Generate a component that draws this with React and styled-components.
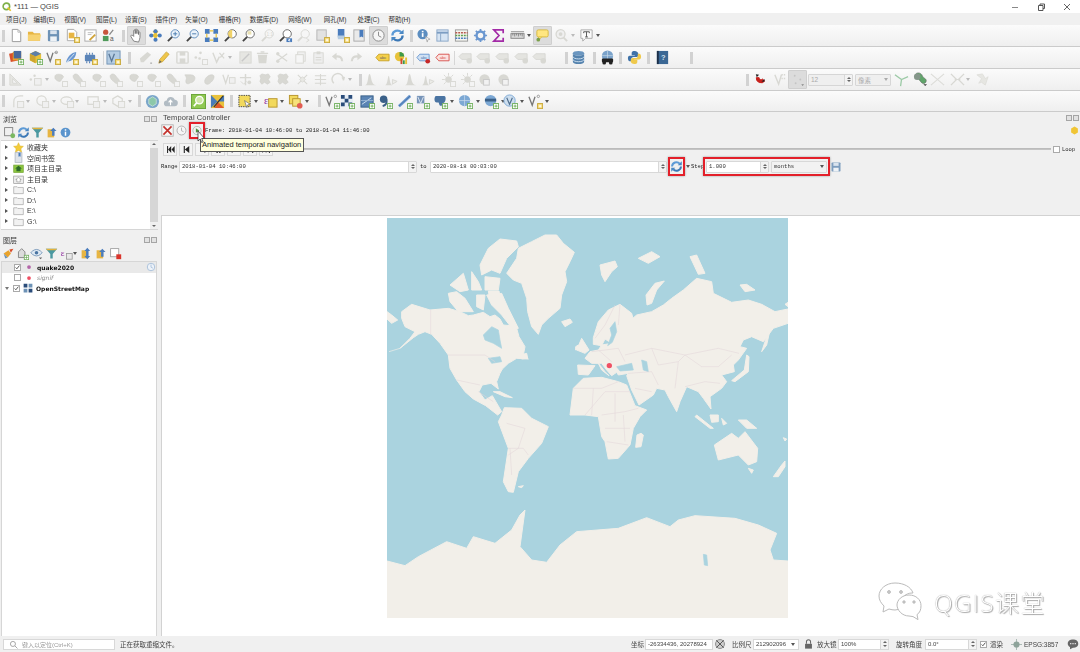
import React from 'react'
import styled, { createGlobalStyle } from 'styled-components'

const SANS = '"Liberation Sans", "Noto Sans CJK SC", sans-serif'
const MONO = '"Liberation Mono", "Noto Sans CJK SC", monospace'

const GlobalStyle = createGlobalStyle`
  html, body { margin: 0; padding: 0; background: #f0f0f0; }
  body { font-family: ${SANS}; font-size: 7px; color: #222; overflow: hidden; }
`

const Page = styled.div`
  width: 1080px;
  height: 652px;
  display: flex;
  flex-direction: column;
  overflow: hidden;
  position: relative;
  filter: blur(0.45px);
`

/* ---------- title + menu ---------- */
const TitleBar = styled.div`
  height: 13px;
  background: #fff;
  display: flex;
  align-items: center;
  padding-left: 2px;
`
const AppTitle = styled.span`
  font-size: 7.5px;
  color: #444;
  margin-left: 2px;
  flex: 1;
`
const WinButton = styled.span`
  width: 26px;
  height: 13px;
  display: flex;
  align-items: center;
  justify-content: center;
`
const MenuBar = styled.div`
  height: 12px;
  background: #f0f0f0;
  display: flex;
  align-items: center;
  padding-left: 6px;
`
const MenuItem = styled.span`
  font-size: 6.5px;
  color: #333;
  white-space: nowrap;
  margin-right: ${p => p.$gap}px;
`

/* ---------- toolbars ---------- */
const Toolbar = styled.div`
  height: ${p => p.$h}px;
  box-sizing: border-box;
  background: linear-gradient(#fbfbfb, #efefef);
  border-bottom: 1px solid #cbcbcb;
  display: flex;
  align-items: center;
  overflow: hidden;
  & svg { width: 15px; height: 15px; }
`
const Slot = styled.span`
  flex: none;
  width: ${p => p.$w}px;
  height: ${p => p.$h || 16}px;
  margin-left: ${p => p.$gap}px;
  display: flex;
  align-items: center;
  justify-content: center;
  box-sizing: border-box;
  background: ${p => (p.$on ? '#dcdcdc' : 'transparent')};
  border: ${p => (p.$on ? '1px solid #cfcfcf' : 'none')};
  border-radius: 1px;
`
const Grip = styled.i`
  display: block;
  width: 3px;
  height: 12px;
  background-image: radial-gradient(#d2d2d2 0.7px, transparent 0.8px);
  background-size: 1.6px 2.4px;
`
const DropArrow = styled.i`
  display: block;
  flex: none;
  width: 0;
  height: 0;
  border-left: 2.2px solid transparent;
  border-right: 2.2px solid transparent;
  border-top: 3px solid ${p => p.$c || '#555'};
`
const Sep = styled.i`
  display: block;
  width: 1px;
  height: 14px;
  background: #d6d6d6;
`
const BarField = styled.span`
  width: 100%;
  height: 12px;
  box-sizing: border-box;
  background: #efefef;
  border: 1px solid #d6d6d6;
  border-radius: 1px;
  display: flex;
  align-items: center;
  justify-content: space-between;
  padding-left: 2px;
  font-size: 6.5px;
  color: #aaa;
`
const SpinBox = styled.span`
  flex: none;
  width: ${p => p.$w || 8}px;
  height: 100%;
  box-sizing: border-box;
  border-left: 1px solid #d8d8d8;
  background: #f3f3f3;
  display: flex;
  flex-direction: column;
  align-items: center;
  justify-content: center;
  gap: 1.5px;
`
const ComboDrop = styled.span`
  flex: none;
  width: ${p => p.$w || 9}px;
  display: flex;
  justify-content: center;
`
const SpinUp = styled.i`
  display: block;
  width: 0;
  height: 0;
  border-left: 2px solid transparent;
  border-right: 2px solid transparent;
  border-bottom: 2px solid #666;
`
const SpinDown = styled(SpinUp)`
  border-bottom: 0;
  border-top: 2px solid #666;
`
const Spin = ({ w }) => (
  <SpinBox $w={w}>
    <SpinUp />
    <SpinDown />
  </SpinBox>
)

/* ---------- icons ---------- */
const Svg = ({ children, size = 16 }) => (
  <svg viewBox="0 0 16 16" width={size} height={size} fill="none">
    {children}
  </svg>
)
const Plus = () => (
  <g>
    <rect x="10.2" y="10.2" width="5.4" height="5.4" fill="#fff" stroke="#6fae5c" />
    <path d="M12.9 11.3v3.2M11.3 12.9h3.2" stroke="#6fae5c" />
  </g>
)
const Star = () => (
  <g>
    <rect x="10.2" y="10.2" width="5.4" height="5.4" fill="#f6dc7c" stroke="#c9a83a" />
    <path d="M12.9 11.5v2.8M11.5 12.9h2.8" stroke="#fff" />
  </g>
)
const GrayBadge = () => <rect x="10.2" y="10.2" width="5.4" height="5.4" fill="#f4f4f4" stroke="#d8d8d4" />
const Mag = ({ fill = '#fff', stroke = '#666', handle = '#444' }) => (
  <g>
    <circle cx="9.8" cy="6.2" r="4.4" fill={fill} stroke={stroke} />
    <path d="M6.6 9.5L2 14" stroke={handle} strokeWidth="2" />
  </g>
)
const G = '#d8d8d3'
const Blob = ({ d }) => <path d={d} fill={G} stroke="#cdcdc8" strokeWidth=".6" />
const blobA = 'M2 5c0-3 5-3 7-2s3 2 1 4-1 3-3 3-3-1-4-2-1-1-1-3z'
const blobB = 'M3 3c2-2 5 0 6 2s4 3 3 6-4 1-5 0-3-2-4-4-1-3 0-4z'
const blobC = 'M4 2l4 1 3-1 2 3-2 3 2 3-3 2-3-2-3 2-2-3 1-3-1-3z'

const ICONS = {
  logo: (
    <Svg size={10}>
      <circle cx="7" cy="7" r="5.2" stroke="#7fb04a" strokeWidth="2.6" />
      <path d="M9 9l5 5" stroke="#e6c229" strokeWidth="2.6" />
    </Svg>
  ),
  new: <Svg><path d="M3.5 1.5h6l3 3v10h-9z" fill="#fff" stroke="#999" /><path d="M9.5 1.5v3h3" stroke="#bbb" /></Svg>,
  open: <Svg><path d="M1 4h5l1.5 1.5H14v8H1z" fill="#e7b543" /><path d="M1 7h14l-1.5 6.5H1z" fill="#f6d272" /></Svg>,
  save: <Svg><rect x="2" y="2" width="12" height="12" rx="1" fill="#6d92b6" /><rect x="4.5" y="2.5" width="7" height="4" fill="#d9e3ee" /><rect x="4.5" y="9" width="7" height="5" fill="#eef2f6" /></Svg>,
  saveAs: <Svg><path d="M2.5 1.5h7l3 3v9h-10z" fill="#fff" stroke="#aaa" /><rect x="4" y="5" width="6" height="6" fill="#e7b543" /><Star /></Svg>,
  layout: <Svg><rect x="2" y="2" width="12" height="12" fill="#fff" stroke="#aaa" /><path d="M5 5h6M5 7h4" stroke="#bbb" /><path d="M7 13l6-6" stroke="#d0a43c" strokeWidth="2" /></Svg>,
  style: <Svg><circle cx="5" cy="4.5" r="2.8" fill="#c8553d" /><rect x="2" y="8.5" width="6" height="5.5" fill="#4f9a5a" /><path d="M9 7l4-5" stroke="#888" strokeWidth="1.4" /><text x="9.5" y="14" fontSize="7" fill="#555" fontFamily="Liberation Sans">a</text></Svg>,
  hand: <Svg><path d="M5 14l-3-5c-.5-1 1-2 2-1l1 1V3c0-1.3 1.6-1.3 1.7 0v3-4c0-1.3 1.7-1.3 1.7 0v4-3c0-1.3 1.7-1.3 1.7 0v4-2c0-1.2 1.6-1.2 1.6 0v5c0 2-1 3-1.5 5z" fill="#fff" stroke="#666" strokeWidth=".8" /></Svg>,
  move: <Svg><path d="M8 1l3 3-1.5 1.5V6.5L11 8 9.5 9.5 8 15 6.5 9.5 1 8l5.5-1.5V5.5L5 4z" fill="#e8c23a" /><circle cx="8" cy="3.5" r="2.2" fill="#4a7cbd" /><circle cx="8" cy="12.5" r="2.2" fill="#4a7cbd" /><circle cx="3.5" cy="8" r="2.2" fill="#4a7cbd" /><circle cx="12.5" cy="8" r="2.2" fill="#4a7cbd" /><circle cx="8" cy="8" r="2" fill="#e8c23a" /></Svg>,
  zoomIn: <Svg><Mag fill="#eaf2fa" stroke="#5f8cbc" /><path d="M9.8 4v4.400M7.600 6.200H12" stroke="#4a7cb0" /></Svg>,
  zoomOut: <Svg><Mag fill="#eaf2fa" stroke="#5f8cbc" /><path d="M7.600 6.200H12" stroke="#4a7cb0" /></Svg>,
  zoomFull: <Svg><path d="M1 1h5v5H1zM10 1h5v5h-5zM1 10h5v5H1zM10 10h5v5h-5z" fill="#4a7cbd" /><path d="M6 3h4M3 6v4M13 6v4M6 13h4" stroke="#e8c23a" strokeWidth="1.3" /></Svg>,
  zoomSel: <Svg><Mag /><path d="M9.8 1.800a4.400 4.400 0 000 8.800z" fill="#f0d26a" /></Svg>,
  zoomLayer: <Svg><Mag /><path d="M7 3.500h4v3.500H7z" fill="#e9e0b0" /></Svg>,
  zoomNative: <Svg><Mag fill="#f6f6f6" stroke={G} handle={G} /><text x="7" y="8" fontSize="5" fill={G} fontFamily="Liberation Sans">1:1</text></Svg>,
  zoomLast: <Svg><Mag /><path d="M9 11h6v4H9z" fill="#4a7cbd" /><path d="M13 12l-2 1 2 1" stroke="#fff" /></Svg>,
  zoomNext: <Svg><Mag fill="#f6f6f6" stroke={G} handle={G} /><path d="M11 11l3 2-3 2" stroke={G} /></Svg>,
  bmNew: <Svg><rect x="2" y="2" width="10" height="11" fill="#e2e2e2" stroke="#b5b5b5" /><Star /></Svg>,
  bmBlue: <Svg><path d="M3 1h7v9l-3.500-1.500L3 10z" fill="#4a7cbd" /><path d="M3 8h7v4H3z" fill="#b5cbe0" /><Star /></Svg>,
  bmShow: <Svg><rect x="2" y="2" width="11" height="12" fill="#eaeaea" stroke="#aaa" /><path d="M8 2h4v8l-2-1-2 1z" fill="#4a7cbd" /></Svg>,
  clock: <Svg><circle cx="8" cy="8" r="6" fill="#f6f6f6" stroke="#888" /><path d="M8 4v4.300l3 1.500" stroke="#888" /></Svg>,
  clockGray: <Svg><circle cx="8" cy="8" r="5.500" fill="#f6f6f6" stroke="#a5a5a5" /><path d="M8 4.500v3.800l2.500 1.200" stroke="#a5a5a5" /></Svg>,
  clockBlue: <Svg size={10}><circle cx="8" cy="8" r="6" fill="#eef3f9" stroke="#a9c0da" strokeWidth="1.5" /><path d="M8 4v4.300l3 1.500" stroke="#a9c0da" strokeWidth="1.4" /></Svg>,
  refresh: <Svg><path d="M2.500 8a5.500 5.500 0 019.500-3.500" stroke="#5c9ad6" strokeWidth="2.4" /><path d="M13.500 8A5.500 5.500 0 014 11.500" stroke="#3b78b6" strokeWidth="2.4" /><path d="M14.500 1.500v5h-5zM1.500 14.500v-5h5z" fill="#4a88c4" /></Svg>,
  identify: <Svg><circle cx="7" cy="6.500" r="5.500" fill="#5b8dc0" /><rect x="6.200" y="5.500" width="1.800" height="4" fill="#fff" /><rect x="6.200" y="3" width="1.800" height="1.600" fill="#fff" /><path d="M10 9l5 3-2.500.6L12 15z" fill="#fff" stroke="#999" strokeWidth=".7" /></Svg>,
  table: <Svg><rect x="2" y="2" width="12" height="12" fill="#d6e4f3" stroke="#8ba8c8" /><path d="M2 5h12" stroke="#7c9dc2" strokeWidth="2" /><path d="M6 5v9" stroke="#8ba8c8" /></Svg>,
  abacus: <Svg><rect x="1.500" y="2" width="13" height="12" fill="#f5f5ef" stroke="#999" /><path d="M1.500 5h13" stroke="#b6584c" strokeDasharray="2 1" strokeWidth="1.5" /><path d="M1.500 8h13" stroke="#5f9e4c" strokeDasharray="2 1" strokeWidth="1.5" /><path d="M1.500 11h13" stroke="#4a7cbd" strokeDasharray="2 1" strokeWidth="1.5" /></Svg>,
  gear: <Svg><circle cx="8" cy="8" r="4.200" fill="none" stroke="#6a97d0" strokeWidth="2.6" /><path d="M8 1v3M8 12v3M1 8h3M12 8h3M3 3l2 2M11 11l2 2M13 3l-2 2M5 11l-2 2" stroke="#6a97d0" strokeWidth="1.8" /></Svg>,
  sigma: <Svg><path d="M3 2h10v3.500M13 2H3l5.500 6L3 14h10v-3.500" stroke="#a32ba7" strokeWidth="1.8" /></Svg>,
  ruler: <Svg><rect x="1" y="6" width="14" height="5" fill="#d9d9d9" stroke="#888" /><path d="M3 6v2M5 6v3M7 6v2M9 6v3M11 6v2M13 6v3" stroke="#666" strokeWidth=".7" /><path d="M1 4h14" stroke="#888" /></Svg>,
  tip: <Svg><rect x="2" y="2" width="12" height="7.500" rx="1.500" fill="#ffe680" stroke="#d6b83e" /><path d="M4 9.500V13l3-3.500" fill="#ffe680" stroke="#d6b83e" /><circle cx="3.500" cy="12.500" r="2" fill="#7aa04a" /></Svg>,
  grayMag: <Svg><circle cx="7" cy="6.500" r="4.800" fill="#efefef" stroke={G} strokeWidth="1.4" /><circle cx="7" cy="6.500" r="2" fill={G} /><path d="M10 10l4 4" stroke={G} strokeWidth="2" /></Svg>,
  textT: <Svg><path d="M2 2h12v9H7l-3 3v-3H2z" fill="#fafafa" stroke="#aaa" /><path d="M5 4h6v1.500M8 4v5.500M6.500 9.500h3M5 5.500V4" stroke="#555" /></Svg>,
  dsm: <Svg><rect x="1" y="3" width="9" height="9" fill="#d94f2b" transform="rotate(-12 5 8)" /><rect x="4" y="2" width="9" height="9" fill="#e8a32c" /><rect x="5" y="1" width="8" height="8" fill="#48699d" /><Plus /></Svg>,
  gpkg: <Svg><path d="M8 1l6 3v7l-6 3-6-3V4z" fill="#e8c23a" /><path d="M8 1l6 3-6 3-6-3z" fill="#5d7fa8" /><path d="M8 7v7l-6-3V4z" fill="#cfa52e" /><Plus /></Svg>,
  vec: <Svg><path d="M1 3l3.500 9L7.500 3" stroke="#777" strokeWidth="1.4" /><path d="M9 3h3" stroke="#999" /><circle cx="11" cy="2.500" r="1.300" stroke="#999" /><Star /></Svg>,
  vecGreen: <Svg><path d="M1 3l3.500 9L7.500 3" stroke="#777" strokeWidth="1.4" /><circle cx="11" cy="2.500" r="1.300" stroke="#999" /><Plus /></Svg>,
  feather: <Svg><path d="M2 14C3 8 7 3 13 2c0 5-3 9-8 10z" fill="#6a97d0" /><path d="M2 14L11 4" stroke="#dce6f2" /><Star /></Svg>,
  chip: <Svg><rect x="2" y="5" width="11" height="7" rx="1" fill="#5a84b8" /><path d="M4 3v2M7 3v2M10 3v2M4 12v2M7 12v2" stroke="#5a84b8" strokeWidth="1.2" /><Star /></Svg>,
  vbox: <Svg><rect x="1" y="1" width="14" height="14" fill="#b4cce3" stroke="#7394b6" /><path d="M3 4l3 8 3-8" stroke="#5a7798" strokeWidth="1.4" /><Star /></Svg>,
  vboxGreen: <Svg><rect x="1" y="1" width="13" height="13" fill="#b4cce3" stroke="#7394b6" /><path d="M3 4l3 8 3-8" stroke="#5a7798" strokeWidth="1.4" /><Plus /></Svg>,
  gEdit: <Svg><path d="M2 9l8-7 4 3-8 8H3z" fill={G} /><path d="M13 14h2" stroke="#999" /></Svg>,
  pencil: <Svg><path d="M3 14l1-4 7-8 3 2.500-7 8z" fill="#efc64a" stroke="#c29c2c" strokeWidth=".7" /><path d="M3 14l1-3 2 1.500z" fill="#666" /></Svg>,
  gSave: <Svg><rect x="2" y="2" width="12" height="12" rx="1" stroke={G} strokeWidth="1.5" /><rect x="5" y="2" width="6" height="4" fill={G} /><rect x="5" y="9" width="6" height="5" fill={G} /></Svg>,
  gDots: <Svg><circle cx="3" cy="8" r="1.400" fill={G} /><circle cx="8" cy="3" r="1.400" fill={G} /><circle cx="7" cy="9" r="1.400" fill={G} /><GrayBadge /></Svg>,
  gNode: <Svg><path d="M2 3l4 10 3-6" stroke={G} strokeWidth="1.5" /><path d="M9 3l5 6M14 3l-4 5" stroke={G} strokeWidth="1.3" /></Svg>,
  gPen: <Svg><rect x="2" y="2" width="12" height="12" fill="#e6e6e2" stroke={G} /><path d="M4 12l8-8" stroke="#c8c8c8" strokeWidth="1.6" /></Svg>,
  gTrash: <Svg><path d="M3 5h10l-1 9H4z" fill={G} /><path d="M2 3.500h12M6 2h4" stroke={G} strokeWidth="1.3" /></Svg>,
  gCut: <Svg><path d="M2 4l11 8M2 12l11-8" stroke={G} strokeWidth="1.3" /><circle cx="3" cy="4" r="1.800" fill={G} /><circle cx="3" cy="12" r="1.800" fill={G} /></Svg>,
  gCopy: <Svg><rect x="5" y="2" width="8" height="10" fill="#f0f0f0" stroke={G} /><rect x="3" y="5" width="8" height="9" fill="#f6f6f6" stroke={G} /></Svg>,
  gPaste: <Svg><rect x="3" y="3" width="10" height="11" fill="#eee" stroke={G} /><rect x="6" y="1.500" width="4" height="3" fill={G} /><path d="M5 8h6M5 10.500h6" stroke={G} /></Svg>,
  gUndo: <Svg><path d="M13 12c0-4-3-6-7-5" stroke={G} strokeWidth="2.4" /><path d="M7 3v8L2 7z" fill={G} /></Svg>,
  gRedo: <Svg><path d="M3 12c0-4 3-6 7-5" stroke={G} strokeWidth="2.4" /><path d="M9 3v8l5-4z" fill={G} /></Svg>,
  label: <Svg><path d="M1 8l3-3.500h11v7H4z" fill="#f5d04a" stroke="#c9a227" /><text x="5" y="10" fontSize="4.500" fill="#666" fontFamily="Liberation Sans">abc</text></Svg>,
  diagram: <Svg><circle cx="7" cy="7" r="5" fill="#e8c23a" /><path d="M7 7V2a5 5 0 015 5z" fill="#3c9a4a" /><rect x="8" y="9" width="2" height="6" fill="#d3492c" /><rect x="10.500" y="11" width="2" height="4" fill="#3c9a4a" /><rect x="13" y="8" width="2" height="7" fill="#e8c23a" /></Svg>,
  labelPin: <Svg><path d="M1 8l3-3.500h10v7H4z" fill="#d0e1f4" stroke="#6a97d0" /><text x="5" y="10" fontSize="4.500" fill="#4a7cb0" fontFamily="Liberation Sans">abc</text><circle cx="12.500" cy="12" r="2.500" fill="#c62828" /></Svg>,
  labelRed: <Svg><path d="M1 8l3-3.500h11v7H4z" fill="#fbe2e0" stroke="#d9534f" /><text x="5" y="10" fontSize="4.500" fill="#d9534f" fontFamily="Liberation Sans">abc</text></Svg>,
  gLabel: <Svg><path d="M1 7l3-3h10v6H4z" fill="#e4e4e0" stroke={G} /><circle cx="12" cy="11.500" r="3" fill={G} /></Svg>,
  db: <Svg><ellipse cx="8" cy="3.500" rx="6" ry="2.500" fill="#6a96c0" /><path d="M2 3.500v9c0 1.400 2.700 2.500 6 2.500s6-1.100 6-2.500v-9c0 1.400-2.700 2.500-6 2.500S2 4.900 2 3.500z" fill="#5583ae" /><path d="M2 7c0 1.400 2.700 2.500 6 2.500S14 8.400 14 7M2 10c0 1.400 2.700 2.500 6 2.500s6-1.100 6-2.500" stroke="#cfe0ef" /></Svg>,
  globeCar: <Svg><circle cx="8" cy="6.500" r="6" fill="#7aa2ca" /><path d="M2 6h12M8 .5v12" stroke="#c8daea" strokeWidth=".7" /><rect x="2" y="9" width="12" height="4" rx="1" fill="#222" /><circle cx="4.500" cy="13.500" r="2" fill="#222" /><circle cx="11.500" cy="13.500" r="2" fill="#222" /></Svg>,
  python: <Svg><path d="M8 1c-3 0-3 1.500-3 3v1.500h3.300V6H3C1 6 1 8 1 9s.5 3 2 3h1.500v-2c0-1.500 1-2.500 2.500-2.500h3c1 0 2-1 2-2V4c0-1.500-1.500-3-4-3z" fill="#3f72a8" /><path d="M8 15c3 0 3-1.500 3-3v-1.500H7.700V10H13c2 0 2-2 2-3s-.5-3-2-3h-1.500v2c0 1.500-1 2.500-2.500 2.500H6c-1 0-2 1-2 2V12c0 1.500 1.500 3 4 3z" fill="#efc94c" /></Svg>,
  help: <Svg><rect x="2" y="1" width="12" height="14" fill="#3a6794" /><rect x="2" y="1" width="2" height="14" fill="#1c2f48" /><text x="6.500" y="11" fontSize="8" fontWeight="700" fill="#cfe0ef" fontFamily="Liberation Sans">?</text></Svg>,
  gTri: <Svg><path d="M2 14V2l12 12z" fill="#e6e6e2" stroke={G} /><path d="M5 12V7l5 5z" fill="#f4f4f4" stroke={G} /></Svg>,
  gDotsDd: <Svg><circle cx="3" cy="8" r="1.300" fill={G} /><circle cx="7" cy="4" r="1.300" fill={G} /><rect x="7" y="7" width="7" height="7" fill="#f0f0f0" stroke={G} /></Svg>,
  b1: <Svg><Blob d={blobA} /><GrayBadge /></Svg>,
  b2: <Svg><Blob d={blobB} /><GrayBadge /></Svg>,
  b3: <Svg><Blob d={blobC} /></Svg>,
  b4: <Svg><Blob d="M2 3h6c4 0 6 3 4 6s-4 2-5 3-4 1-4-2 2-2-1-7z" /></Svg>,
  b5: <Svg><Blob d="M3 11c-1-3 3-8 7-8s3 3 2 5-5 6-7 5-2-1-2-2z" /></Svg>,
  gMerge: <Svg><path d="M2 3l3 9 3-9" stroke={G} strokeWidth="1.4" /><rect x="9" y="6" width="6" height="6" fill="#f0f0f0" stroke={G} /></Svg>,
  gCross: <Svg><path d="M8 2v12M2 6h12" stroke={G} strokeWidth="1.5" /><path d="M3 10l3 3 3-3" stroke={G} /><circle cx="12" cy="11" r="2" fill={G} /></Svg>,
  gDelta: <Svg><path d="M3 3l10 10M13 3L3 13" stroke={G} strokeWidth="1.2" /><path d="M5 8l3-3 3 3-3 3z" fill="#e8e8e4" stroke={G} /></Svg>,
  gLines: <Svg><path d="M2 4h12M2 8h12M2 12h12M8 2v12" stroke={G} strokeWidth="1.2" /></Svg>,
  gCurve: <Svg><path d="M3 12a6 6 0 1110-3" stroke={G} strokeWidth="1.5" /><path d="M11 6l3 3 1-4z" fill={G} /></Svg>,
  gBar: <Svg><path d="M2 14c4 0 3-12 5-12s1 12 7 12z" fill={G} /></Svg>,
  gBar2: <Svg><path d="M1 14c3 0 3-10 4-10s1 10 4 10z" fill={G} /><path d="M9 8l5 2-5 3z" fill="#ececE8" stroke={G} /></Svg>,
  gSun: <Svg><circle cx="8" cy="8" r="3.500" fill={G} /><path d="M8 1v3M1 8h3M3 3l2 2M13 3l-2 2M3 13l2-2" stroke={G} /><GrayBadge /></Svg>,
  gLock: <Svg><circle cx="7" cy="8" r="5.500" fill={G} /><rect x="6" y="8" width="6" height="6" fill="#f2f2f2" stroke="#c8c8c8" /></Svg>,
  magnet: <Svg><path d="M3.500 6a5 5 0 009 3.500l-2.500-2a2 2 0 01-3.500-1.500z" fill="#c8201c" stroke="#c8201c" /><path d="M4 5.500L3 2.500l3.500.5zM9 10l3.500-2.500-.5 3" fill="#222" /></Svg>,
  gSnap: <Svg><path d="M2 3l4 10 3-10" stroke={G} strokeWidth="1.5" /><path d="M9 3h5M9 7h4" stroke={G} strokeDasharray="1.500 1" strokeWidth="1.5" /></Svg>,
  dice: <Svg><circle cx="5" cy="4" r="1" fill="#c4c4c4" /><circle cx="11" cy="8" r="1" fill="#c4c4c4" /><circle cx="6" cy="12" r="1" fill="#c4c4c4" /><path d="M12 13l3 0-1.500 2z" fill="#888" /></Svg>,
  yGreen: <Svg><path d="M1 3l7 5 7-3M8 8l-1 7" stroke="#9ccaa6" strokeWidth="1.4" /></Svg>,
  blobGreen: <Svg><path d="M3 2c2-2 6-1 7 2s5 3 4 6-4 3-6 0S1 4 3 2z" fill="#5fa56a" stroke="#666" strokeWidth=".6" /><circle cx="4.500" cy="5" r="3.500" fill="#85968a" /><path d="M11 13h4l-2 2z" fill="#444" /></Svg>,
  xGray: <Svg><path d="M1 2l14 12M15 2L1 14" stroke="#dcdcd8" strokeWidth="1.2" /></Svg>,
  xGray2: <Svg><path d="M1 2l6 6-6 6M15 2l-6 6 6 6" stroke={G} strokeWidth="1.4" /><path d="M5 8h6" stroke={G} /></Svg>,
  zGray: <Svg><path d="M2 3l5 4-3 5 3-1 4 3 3-9-3 2-3-5z" fill="#e6e6e2" stroke={G} strokeWidth=".6" /></Svg>,
  cCurve: <Svg><path d="M3 14V8c0-4 3-6 7-6h3" stroke={G} strokeWidth="1.3" /><rect x="7" y="8" width="6.500" height="6.500" fill="#f0f0f0" stroke={G} /></Svg>,
  cCirc: <Svg><circle cx="7" cy="7" r="5" stroke={G} strokeWidth="1.3" /><rect x="8" y="8" width="6.500" height="6.500" fill="#f0f0f0" stroke={G} /></Svg>,
  cEll: <Svg><ellipse cx="7" cy="7" rx="6" ry="4" stroke={G} strokeWidth="1.3" /><rect x="8" y="8" width="6.500" height="6.500" fill="#f0f0f0" stroke={G} /></Svg>,
  cRect: <Svg><rect x="2" y="3" width="11" height="8" stroke={G} strokeWidth="1.3" /><rect x="8" y="8" width="6.500" height="6.500" fill="#f0f0f0" stroke={G} /></Svg>,
  cPoly: <Svg><path d="M7 2l5 3v5l-5 3-5-3V5z" stroke={G} strokeWidth="1.3" /><rect x="8" y="8" width="6.500" height="6.500" fill="#f0f0f0" stroke={G} /></Svg>,
  globeBox: <Svg><circle cx="8" cy="8" r="7" fill="#7aa6ca" /><path d="M8 3l4 2.500v5L8 13l-4-2.500v-5z" fill="#8cc8aa" stroke="#e8f2ea" strokeWidth=".6" /></Svg>,
  cloud: <Svg><path d="M4 13a3 3 0 010-6 4.500 4.500 0 018.600-1A3.500 3.500 0 0112 13z" fill="#b2bcc4" /><path d="M8 12V7M6 9l2-2.500L10 9" stroke="#fff" strokeWidth="1.2" /></Svg>,
  greenMag: <Svg><rect x=".5" y=".5" width="15" height="15" fill="#8fc852" stroke="#68a436" /><circle cx="9" cy="6.500" r="4" fill="#cfe6a8" stroke="#fff" strokeWidth="1.3" /><path d="M6 9.500l-3 3.500" stroke="#fff" strokeWidth="1.8" /></Svg>,
  colorMap: <Svg><rect x="1" y="1" width="14" height="14" fill="#e9c23b" /><path d="M1 1l7 7-7 7zM8 8l7-7v7z" fill="#4a7cb8" /><path d="M8 8l7 7H5z" fill="#e15b2c" /><path d="M4 14L14 2" stroke="#333" strokeWidth="1.2" /></Svg>,
  selRect: <Svg><rect x="2" y="1.500" width="12" height="12" fill="#f2d95c" stroke="#444" strokeDasharray="1.500 1" /><path d="M8 7l6 4-2.500.5-1 3z" fill="#fff" stroke="#666" strokeWidth=".7" /></Svg>,
  selExpr: <Svg><rect x="6" y="5" width="9" height="9" fill="#f2d95c" stroke="#b8962c" /><text x="1" y="11" fontSize="11" fill="#8c2a9c" fontFamily="Liberation Serif">ε</text></Svg>,
  deselect: <Svg><rect x="1.500" y="1.500" width="9" height="9" fill="#f2d95c" stroke="#b8962c" /><rect x="5" y="5" width="8" height="8" fill="#f7e27a" stroke="#b8962c" /><circle cx="12.500" cy="12.500" r="3" fill="#e25c52" /></Svg>,
  mesh: <Svg><rect x="1" y="1" width="13" height="13" fill="#e7eef6" /><path d="M1 1h4v4H1zM9 1h4v4H9zM5 5h4v4H5zM1 9h4v4H1zM9 9h4v4H9z" fill="#2a4c7a" /><Plus /></Svg>,
  meshBlue: <Svg><rect x="1" y="2" width="13" height="12" fill="#5a84b4" stroke="#3a6088" /><path d="M2 11L12 4" stroke="#cfe0ef" /><path d="M1 7h13" stroke="#97b4d4" /><Plus /></Svg>,
  comma: <Svg><circle cx="6" cy="5.500" r="4" fill="#3a6088" /><path d="M9 6c1 4-1 6-4 7" stroke="#3a6088" strokeWidth="2" /><Plus /></Svg>,
  blueLine: <Svg><path d="M1 13L13 2" stroke="#6a97d0" strokeWidth="3" /><path d="M1 13L13 2" stroke="#2c5c8c" strokeWidth=".6" /><Plus /></Svg>,
  vMesh: <Svg><path d="M2 2h8v8H2z" fill="#7794b8" /><path d="M3 3l3 7 3-7" stroke="#dfe9f3" /><Plus /></Svg>,
  elephant: <Svg><path d="M3 2h9c2 0 2 5 0 7l-2 1-1 3-2-1-1-3H4C1 9 1 3 3 2z" fill="#4a74a2" /><Plus /></Svg>,
  globePlus: <Svg><circle cx="7" cy="7" r="6" fill="#7ca8d4" /><path d="M1 7h12M7 1v12" stroke="#cfe0ef" strokeWidth=".7" /><Plus /></Svg>,
  globeBar: <Svg><circle cx="7" cy="7" r="6" fill="#7ca8d4" /><rect x="1" y="5" width="12" height="3" fill="#3a6088" /><Plus /></Svg>,
  globeV: <Svg><circle cx="7" cy="7" r="6" fill="#cddeee" stroke="#7ca8d4" /><path d="M4 4l3 7 3-7" stroke="#4d6c8c" strokeWidth="1.2" /><Plus /></Svg>,
  vecYellow: <Svg><path d="M1 3l3.500 9L7.500 3" stroke="#777" strokeWidth="1.4" /><circle cx="11" cy="2.500" r="1.300" stroke="#999" /><Star /></Svg>,
  addGroup: <Svg><rect x="2" y="2" width="10" height="10" stroke="#777" /><circle cx="12" cy="12" r="3" fill="#7ab860" /></Svg>,
  funnel: <Svg><path d="M1 2h14L9.500 8.500V14h-3V8.500z" fill="#4a98a0" /><path d="M1 2h14l-2 2H3z" fill="#e3b23c" /></Svg>,
  collapse: <Svg><path d="M2 4h8v10H2z" fill="#e7b543" /><path d="M9 2l4 4H10.500v6h-3V6H5z" fill="#4a7cbd" /></Svg>,
  info: <Svg><circle cx="8" cy="8" r="6" fill="#5a94cd" /><rect x="7.100" y="7" width="1.800" height="5" fill="#fff" /><rect x="7.100" y="4" width="1.800" height="1.800" fill="#fff" /></Svg>,
  paint: <Svg><path d="M2 8l6-4 3 4-4 5z" fill="#e8a32c" /><path d="M9 3l5-1-3 5z" fill="#d94f2b" /><path d="M2 8l2 6 3-1z" fill="#6d92b6" /></Svg>,
  addLayer: <Svg><path d="M3 13V6l4-4 4 4v7z" fill="#dcdcdc" stroke="#777" /><Plus /></Svg>,
  eye: <Svg><path d="M1 7s3-4 7-4 7 4 7 4-3 4-7 4-7-4-7-4z" fill="#dfe9f3" stroke="#6a8cb2" /><circle cx="8" cy="7" r="2.200" fill="#4a74a2" /><path d="M11 13h4l-2 2z" fill="#666" /></Svg>,
  expr: <Svg><rect x="8" y="8" width="7" height="7" fill="#e8e8e8" stroke="#999" /><text x="1" y="11" fontSize="11" fill="#8c2a9c" fontFamily="Liberation Serif">ε</text></Svg>,
  expand: <Svg><path d="M2 4h8v10H2z" fill="#e7b543" /><path d="M9 1l3.500 4H10.500v6H12.500L9 15 5.500 11H7.500V5H5.500z" fill="#4a7cbd" /></Svg>,
  remove: <Svg><rect x="2" y="2" width="10" height="10" fill="#fff" stroke="#999" /><rect x="9" y="9" width="6" height="6" fill="#d9352c" /></Svg>,
  closeRed: <Svg><rect x="1" y="1" width="14" height="14" fill="#f6f6f6" stroke="#aaa" /><path d="M3 3l10 10M13 3L3 13" stroke="#c4302b" strokeWidth="2" /></Svg>,
  playGray: <Svg><circle cx="8" cy="8" r="5.500" fill="#f2f2f2" stroke="#a4b0a4" /><path d="M6.500 5l4.500 3-4.500 3z" fill="#4f8f3f" /></Svg>,
  skipStart: <Svg size={11}><path d="M3 3h1.500v10H3zM9 3v10L4.500 8zM14 3v10L9.500 8z" fill="#222" /></Svg>,
  stepStart: <Svg size={11}><path d="M4 3h1.600v10H4zM12 3v10L5.600 8z" fill="#222" /></Svg>,
  playBack: <Svg size={11}><path d="M12 3v10L5 8z" fill="#333" /></Svg>,
  pause: <Svg size={11}><path d="M5 3h2v10H5zM9 3h2v10H9z" fill="#333" /></Svg>,
  playFwd: <Svg size={11}><path d="M4 3v10l7-5z" fill="#333" /></Svg>,
  stepEnd: <Svg size={11}><path d="M4 3v10l6.400-5zM10.400 3H12v10h-1.600z" fill="#333" /></Svg>,
  skipEnd: <Svg size={11}><path d="M2 3v10l4.500-5zM7 3v10l4.500-5zM11.500 3H13v10h-1.500z" fill="#333" /></Svg>,
  saveSmall: <Svg size={12}><rect x="2" y="2" width="12" height="12" rx="1" fill="#7d9dbe" /><rect x="4.500" y="2.500" width="7" height="4" fill="#d9e3ee" /><rect x="4.500" y="9" width="7" height="5" fill="#eef2f6" /></Svg>,
  hexYellow: <Svg size={9}><path d="M8 1l6 3.500v7L8 15l-6-3.500v-7z" fill="#f0c535" /></Svg>,
  layerPts: <Svg size={10}><circle cx="8" cy="8" r="3" fill="#b365a8" /></Svg>,
  layerPtsRed: <Svg size={10}><circle cx="8" cy="8" r="3" fill="#ef4f63" /></Svg>,
  osm: <Svg size={10}><path d="M1 1h6v6H1zM9 9h6v6H9z" fill="#2a4c7a" /><path d="M9 1h6v6H9zM1 9h6v6H1z" fill="#6d92b6" /></Svg>,
  star: <Svg size={11}><path d="M8 1l2.200 4.700 5 .6-3.700 3.500 1 5L8 12.300 3.500 14.800l1-5L.8 6.300l5-.6z" fill="#f3cc3a" stroke="#d6ab22" strokeWidth=".6" /></Svg>,
  bookmark: <Svg size={11}><rect x="3" y="1" width="10" height="14" fill="#dfe4ea" stroke="#a5aeb8" /><path d="M8 1h3v6L9.500 6 8 7z" fill="#4a7cbd" /></Svg>,
  home: <Svg size={11}><rect x="1" y="3" width="14" height="11" fill="#8cc63f" stroke="#7aa83f" /><path d="M8 4l5 4h-2v4H5V8H3z" fill="#2f6b2a" /></Svg>,
  homeDir: <Svg size={11}><rect x="1" y="3" width="14" height="11" fill="#eee" stroke="#999" /><path d="M8 5l4 3h-1.500v3.500h-5V8H4z" fill="#fff" stroke="#777" strokeWidth=".7" /></Svg>,
  folder: <Svg size={11}><path d="M1 4h5l1 1h8v9H1z" fill="#f2f2f2" stroke="#a5a5a5" /></Svg>,
  coord: <Svg size={12}><circle cx="8" cy="8" r="6" fill="#ccc" stroke="#777" /><path d="M3 3l10 10M13 3L3 13" stroke="#555" strokeWidth="1.3" /></Svg>,
  lock: <Svg size={11}><rect x="3" y="7" width="10" height="7" fill="#666" /><path d="M5 7V4a3 3 0 016 0v3" stroke="#666" strokeWidth="1.5" /></Svg>,
  crs: <Svg size={11}><circle cx="8" cy="8" r="4.500" fill="#8ea39a" /><path d="M8 0v16M0 8h16" stroke="#8ea39a" /></Svg>,
  msg: <Svg size={12}><path d="M8 2c4 0 7 2 7 5.500S12 13 8 13l-4 2v-3C2 11 1 9 1 7.500 1 4 4 2 8 2z" fill="#666" /><circle cx="5" cy="7.500" r=".9" fill="#fff" /><circle cx="8" cy="7.500" r=".9" fill="#fff" /><circle cx="11" cy="7.500" r=".9" fill="#fff" /></Svg>,
  search: <Svg size={9}><circle cx="7" cy="7" r="4.500" stroke="#999" strokeWidth="1.5" /><path d="M10.500 10.500L15 15" stroke="#999" strokeWidth="1.5" /></Svg>,
}

/* an item is [kind, centre x]. the gap before it is worked out from the previous one */
const WIDTHS = { grip: 3, dd: 5, ddGray: 5, sep: 1 }
const ToolItems = ({ items, offset = 0 }) => {
  let right = offset
  return items.map(([kind, cx, w], i) => {
    const on = kind.endsWith('!')
    const name = on ? kind.slice(0, -1) : kind
    const width = w || WIDTHS[name] || (on ? 19 : 16)
    const gap = cx - width / 2 - right
    right = cx + width / 2
    let inner = ICONS[name]
    if (name === 'grip') inner = <Grip />
    if (name === 'dd') inner = <DropArrow />
    if (name === 'ddGray') inner = <DropArrow $c="#bbb" />
    if (name === 'sep') inner = <Sep />
    if (name === 'size12') inner = <BarField>12<Spin /></BarField>
    if (name === 'pxCombo') inner = <BarField>像素<ComboDrop><DropArrow $c="#aaa" /></ComboDrop></BarField>
    return (
      <Slot key={i} $w={width} $h={on ? 19 : 16} $gap={gap} $on={on}>
        {inner}
      </Slot>
    )
  })
}

const TB1 = [
  ['grip', 3], ['new', 16], ['open', 34.5], ['save', 53], ['saveAs', 72], ['layout', 90], ['style', 108],
  ['grip', 123], ['hand!', 136.5], ['move', 155], ['zoomIn', 173], ['zoomOut', 192], ['zoomFull', 211], ['zoomSel', 230],
  ['zoomLayer', 248], ['zoomNative', 267], ['zoomLast', 285], ['zoomNext', 303], ['bmNew', 322], ['bmBlue', 342], ['bmShow', 359],
  ['clock!', 378], ['refresh', 397], ['grip', 411], ['identify', 423], ['table', 442], ['abacus', 461], ['gear', 480], ['sigma', 498],
  ['ruler', 517], ['dd', 529], ['tip!', 542], ['grayMag', 561], ['ddGray', 573], ['textT', 586], ['dd', 598],
]
const TB2 = [
  ['grip', 3], ['dsm', 16], ['gpkg', 35], ['vec', 53], ['feather', 71], ['chip', 90], ['sep', 103], ['vbox', 113],
  ['grip', 129], ['gEdit', 145], ['pencil', 163], ['gSave', 182], ['gDots', 200], ['gNode', 218], ['ddGray', 230], ['gPen', 245],
  ['gTrash', 262], ['gCut', 282], ['gCopy', 300], ['gPaste', 318], ['gUndo', 337], ['gRedo', 356], ['label', 382], ['diagram', 400],
  ['sep', 413], ['labelPin', 423], ['labelRed', 442], ['sep', 454], ['gLabel', 465], ['gLabel', 483], ['gLabel', 502], ['gLabel', 521], ['gLabel', 539],
  ['grip', 566], ['db', 578], ['grip', 594], ['globeCar', 607], ['grip', 620], ['python', 634], ['grip', 648], ['help', 662], ['grip', 691],
]
const TB3 = [
  ['grip', 3], ['gTri', 15], ['gDotsDd', 35], ['ddGray', 47], ['b1', 60], ['b2', 78], ['b1', 98], ['b2', 115], ['b1', 135], ['b1', 153],
  ['b2', 172], ['b4', 190], ['b5', 209], ['gMerge', 228], ['gCross', 245], ['b3', 265], ['b3', 283], ['gDelta', 302], ['gLines', 320],
  ['gCurve', 338], ['ddGray', 350], ['grip', 360], ['gBar', 370], ['gBar2', 391], ['gBar', 410], ['gBar2', 428], ['gSun', 448], ['gSun', 467],
  ['gLock', 485], ['gLock', 504], ['grip', 747], ['magnet', 760], ['gSnap', 780], ['dice!', 797], ['size12', 830.5, 45], ['pxCombo', 873, 36],
  ['yGreen', 901], ['blobGreen', 920], ['xGray', 937], ['xGray2', 957], ['ddGray', 968], ['zGray', 982],
]
const TB4 = [
  ['grip', 3], ['cCurve', 18], ['ddGray', 28], ['cCirc', 42], ['ddGray', 54], ['cEll', 67], ['ddGray', 77], ['cRect', 93], ['ddGray', 105],
  ['cPoly', 118], ['ddGray', 130], ['grip', 139], ['globeBox', 152], ['cloud', 170], ['grip', 184], ['greenMag', 198], ['colorMap', 217],
  ['grip', 231], ['selRect', 244], ['dd', 256], ['selExpr', 270], ['dd', 282], ['deselect', 295], ['dd', 307], ['grip', 319],
  ['vecGreen', 332], ['mesh', 347], ['meshBlue', 367], ['comma', 385], ['blueLine', 405], ['vMesh', 422], ['elephant', 440], ['dd', 452],
  ['globePlus', 465], ['dd', 478], ['globeBar', 491], ['dd', 503], ['globeV', 510.5], ['dd', 522], ['vecYellow', 535], ['dd', 547],
]

/* ---------- main area ---------- */
const Main = styled.div`
  flex: 1;
  min-height: 0;
  display: flex;
`
const LeftDock = styled.aside`
  width: 158px;
  flex: none;
  display: flex;
  flex-direction: column;
`
const PanelHead = styled.div`
  height: 11px;
  display: flex;
  align-items: center;
  justify-content: space-between;
  padding: 0 1px 0 3px;
  font-size: 7px;
  color: #333;
  margin-top: ${p => p.$mt || 0}px;
`
const DockBtns = styled.span`
  display: flex;
  gap: 1px;
`
const DockBtn = styled.i`
  display: block;
  width: 6px;
  height: 6px;
  box-sizing: border-box;
  border: 1px solid #a5a5a5;
  background: #e2e2e2;
`
const PanelTools = styled.div`
  height: 16px;
  display: flex;
  align-items: center;
  & svg { width: 13px; height: 13px; }
`
const BrowserBody = styled.div`
  height: 90px;
  flex: none;
  margin-left: 1px;
  display: flex;
  background: #fff;
  border-top: 1px solid #d6d6d6;
  border-bottom: 1px solid #d6d6d6;
  box-sizing: border-box;
  overflow: hidden;
`
const Tree = styled.ul`
  list-style: none;
  margin: 0;
  padding: 1px 0 0;
  flex: 1;
`
const TreeRow = styled.li`
  height: 10.6px;
  display: flex;
  align-items: center;
  padding-left: ${p => p.$pad || 4}px;
  font-size: 7px;
  color: #333;
  background: ${p => (p.$sel ? '#e9e9e9' : 'transparent')};
`
const Arrow = styled.i`
  display: block;
  flex: none;
  width: 0;
  height: 0;
  border-top: 2.5px solid transparent;
  border-bottom: 2.5px solid transparent;
  border-left: 3px solid #555;
  margin-right: 5px;
`
const DownArrow = styled.i`
  display: block;
  flex: none;
  width: 0;
  height: 0;
  border-left: 2.5px solid transparent;
  border-right: 2.5px solid transparent;
  border-top: 3px solid #777;
  margin-right: 4px;
`
const TreeIcon = styled.span`
  width: 11px;
  flex: none;
  display: flex;
  margin-right: ${p => p.$mr ?? 3}px;
`
const ScrollBar = styled.div`
  width: 8px;
  flex: none;
  background: #f0f0f0;
  display: flex;
  flex-direction: column;
  justify-content: space-between;
  align-items: center;
  padding: 2px 0;
  box-sizing: border-box;
`
const ScrollThumb = styled.div`
  width: 8px;
  flex: 1;
  margin: 3px 0;
  background: #d6d6d6;
`
const LayerBody = styled.div`
  flex: 1;
  margin-left: 1px;
  margin-right: 1px;
  background: #fff;
  border: 1px solid #d6d6d6;
  border-bottom: 0;
  padding-top: 0;
`
const CheckBox = styled.span`
  flex: none;
  width: 7px;
  height: 7px;
  box-sizing: border-box;
  border: 1px solid #aaa;
  background: #fff;
  margin-right: 3px;
  display: flex;
  align-items: center;
  justify-content: center;
`
const LayerName = styled.span`
  font-size: 6px;
  flex: 1;
  font-weight: ${p => (p.$dim ? 400 : 700)};
  font-style: ${p => (p.$dim ? 'italic' : 'normal')};
  color: ${p => (p.$dim ? '#8a8a8a' : '#111')};
  font-family: "DejaVu Sans", sans-serif;
`
const Tick = () => (
  <svg viewBox="0 0 8 8" width="7" height="7" fill="none">
    <path d="M1 4l2 2 4-5" stroke="#222" strokeWidth="1.2" />
  </svg>
)
const Splitter = styled.div`
  width: 3px;
  flex: none;
`
const RightDock = styled.section`
  flex: 1;
  min-width: 0;
  display: flex;
  flex-direction: column;
  position: relative;
`
const Temporal = styled.div`
  height: 103px;
  flex: none;
  font-family: ${MONO};
`
const TempTitle = styled.div`
  height: 9px;
  display: flex;
  align-items: center;
  justify-content: space-between;
  padding: 1px 1px 0 2px;
  font-family: ${SANS};
  font-size: 7.5px;
  color: #444;
  letter-spacing: 0.1px;
`
const TempTools = styled.div`
  height: 17px;
  display: flex;
  align-items: center;
  & svg { width: 13px; height: 13px; }
`
const ToolHolder = styled.span`
  width: ${p => p.$w}px;
  height: 17px;
  display: flex;
  align-items: center;
  justify-content: center;
  flex: none;
`
const RedBox = styled.span`
  flex: none;
  display: flex;
  align-items: center;
  justify-content: ${p => p.$justify || 'center'};
  box-sizing: border-box;
  width: ${p => p.$w}px;
  height: ${p => p.$h}px;
  margin-left: ${p => p.$ml || 0}px;
  border: 2px solid #e3202a;
  box-shadow: 0 0 2px rgba(0, 0, 0, 0.35);
  padding-left: ${p => p.$pad || 0}px;
  & > svg { width: 13px; height: 13px; }
`
const FrameText = styled.span`
  flex: none;
  width: 168px;
  font-size: 5.6px;
  color: #222;
  white-space: nowrap;
`
const HintBox = styled.span`
  flex: none;
  width: 14px;
  height: 13px;
  display: flex;
  align-items: center;
  justify-content: center;
  background: #f4f4f4;
  border: 1px solid #d8d8d8;
  box-sizing: border-box;
`
const PlayRow = styled.div`
  height: 14px;
  margin-top: 3px;
  display: flex;
  align-items: center;
  padding-left: 2px;
  gap: 2px;
`
const Slider = styled.span`
  flex: 1;
  height: 1px;
  margin-left: 2px;
  background: #c4c4c4;
  border-top: 1px solid #bbb;
`
const LoopLabel = styled.span`
  display: flex;
  align-items: center;
  font-size: 5.5px;
  width: 27px;
  flex: none;
  & > span { margin-right: 2px; }
`
const RangeRow = styled.div`
  height: 19px;
  margin-top: 1px;
  display: flex;
  align-items: center;
`
const Caption = styled.span`
  flex: none;
  width: ${p => p.$w}px;
  margin-left: ${p => p.$ml || 0}px;
  font-size: 5.5px;
  color: #222;
  white-space: nowrap;
`
const DateField = styled.span`
  flex: none;
  width: ${p => p.$w}px;
  height: 12px;
  box-sizing: border-box;
  background: ${p => (p.$combo ? '#f2f2f2' : '#fff')};
  border: 1px solid #d8d8d8;
  border-radius: 1px;
  display: flex;
  align-items: center;
  justify-content: space-between;
  padding-left: 2px;
  margin-left: ${p => p.$ml || 0}px;
  font-size: 5.6px;
  color: #333;
`
const Canvas = styled.div`
  flex: 1;
  min-height: 0;
  background: #fff;
  border: 1px solid #d2d2d2;
  border-right: 0;
  border-bottom: 0;
  padding: 2px 0 0 225px;
  position: relative;
`
const MapSvg = styled.svg`
  display: block;
  width: 401px;
  height: 400px;
`
const Tooltip = styled.div`
  position: absolute;
  left: 39px;
  top: 26px;
  width: 104px;
  height: 14px;
  box-sizing: border-box;
  background: #ffffdc;
  border: 1px solid #555;
  font-family: ${SANS};
  font-size: 7.5px;
  line-height: 12px;
  padding-left: 1px;
  color: #222;
  white-space: nowrap;
`
const Cursor = styled.svg`
  position: absolute;
  left: 36px;
  top: 19px;
  width: 8px;
  height: 12px;
`
const Watermark = styled.div`
  position: absolute;
  right: 34px;
  bottom: 8px;
  display: flex;
  align-items: center;
  gap: 12px;
`
const WaterText = styled.span`
  font-family: "Open Sans", "Noto Sans CJK SC", sans-serif;
  font-size: 24px;
  font-weight: 300;
  letter-spacing: 1.5px;
  color: #fff;
  margin-bottom: 8px;
  text-shadow: 0 0 1px #888, 1px 1px 1px #aaa;
`

/* ---------- status bar ---------- */
const Status = styled.footer`
  height: 16px;
  flex: none;
  display: flex;
  align-items: center;
  background: #f0f0f0;
  font-size: 6.5px;
  color: #444;
`
const StatusField = styled.span`
  flex: none;
  box-sizing: border-box;
  width: ${p => p.$w}px;
  height: 11px;
  margin-left: ${p => p.$ml || 0}px;
  background: #fff;
  border: 1px solid #d8d8d8;
  display: flex;
  align-items: center;
  justify-content: space-between;
  padding-left: 2px;
  white-space: nowrap;
  overflow: hidden;
  color: ${p => p.$c || '#444'};
  font-size: 6px;
`
const StatusText = styled.span`
  flex: none;
  margin-left: ${p => p.$ml || 0}px;
  width: ${p => p.$w}px;
  white-space: nowrap;
  color: ${p => p.$c || '#444'};
`
const StatusIcon = styled.span`
  flex: none;
  display: flex;
  margin-left: ${p => p.$ml || 0}px;
`

/* map shapes, in 3x pixels of the map picture */
const LAND = [
  '50,290 80,268 135,285 190,280 225,290 250,302 265,300 295,292 315,305 330,300 345,312 355,330 375,332 395,340 402,365 420,395 415,420 430,432 395,430 370,445 352,462 345,475 335,500 340,522 318,505 292,510 282,530 300,555 322,542 350,590 338,600 302,572 265,552 240,530 215,495 195,460 190,420 165,385 140,358 120,350 100,358 85,368 45,400 75,370 90,350 60,335 50,310',
  '6,290 20,300 38,315 20,325 6,312',
  '365,175 395,130 400,100 440,80 480,60 515,60 535,85 568,112 555,140 540,170 545,200 530,240 525,280 490,310 470,330 460,358 440,335 428,290 425,250 410,205 385,195',
  '285,150 310,100 345,72 395,78 400,95 365,130 345,175 320,165 290,180',
  '305,240 350,235 370,280 400,340 385,345 350,300 320,270',
  '195,210 235,175 250,225 225,230', '260,170 280,200 290,225 260,225', '190,235 215,230 240,250 265,290 220,290 195,260',
  '300,185 345,190 340,225 300,225', '275,240 300,240 295,285 275,275', '310,228 342,228 346,250 312,240',
  '405,420 425,415 428,430 410,432',
  '530,320 555,312 562,322 540,335',
  '645,150 690,138 697,155 680,170 660,200 650,180',
  '760,130 800,110 825,125 790,145',
  '786,270 783,240 810,205 838,198 815,225 800,265',
  '915,125 935,120 960,175 940,178',
  '1065,210 1085,208 1110,225 1080,230',
  '1209,262 1200,268 1209,275',
  '625,368 640,320 670,285 705,268 740,295 745,315 720,330 755,300 800,290 835,270 860,250 895,225 935,190 980,200 985,235 1040,262 1090,255 1130,268 1170,290 1209,282 1209,325 1165,340 1135,380 1100,365 1075,375 1065,395 1085,400 1060,435 1045,450 1048,470 1010,480 1025,500 1010,520 975,545 978,582 955,550 940,530 905,515 885,560 875,590 850,545 840,525 815,520 805,540 762,570 740,525 725,482 730,475 700,480 695,472 680,482 665,465 650,445 620,445 600,430 615,410 640,405 650,390 680,385 660,372 650,392 625,388',
  '640,445 660,470 672,482 650,465',
  '575,405 590,370 612,405 600,415', '572,395 580,390 582,402 572,405',
  '578,450 630,452 610,480 580,478',
  '555,600 565,520 595,490 650,487 700,500 725,510 750,572 785,585 765,605 745,640 735,690 700,730 670,732 660,680 650,665 640,605 600,600',
  '752,697 756,660 768,655 775,660 768,695',
  '340,620 350,600 358,578 410,580 440,610 490,635 470,685 430,730 400,770 385,832 370,830 355,800 370,700',
  '325,530 345,530 382,548 360,545', '400,815 415,812 410,818',
  '988,690 1040,655 1060,670 1080,650 1118,700 1115,740 1090,750 1060,720 1000,735',
  '1090,760 1105,765 1100,775', '1165,785 1190,750 1200,738 1200,755 1180,785', '1195,668 1205,672 1200,678',
  '935,600 985,640 975,640 930,605', '975,600 1000,600 1000,620 980,622', '1060,615 1085,615 1115,640 1085,640', '1010,610 1025,625 1015,630',
  '1040,497 1078,465 1085,420 1092,425 1090,470 1050,500', '1130,410 1145,365 1155,345 1145,390',
  '6,1038 60,1052 100,1025 185,980 245,1000 265,965 330,985 380,945 405,900 420,885 405,995 440,1035 485,1042 525,990 575,950 700,940 785,908 855,935 880,915 930,902 1050,910 1120,930 1175,955 1155,1005 1165,1035 1209,1038 1209,1209 6,1209',
]
const WATER = [
  '295,360 320,335 340,345 345,375 350,400 325,385 300,375',
  '675,340 690,320 695,350 682,382 668,392 680,360',
  '695,455 740,445 745,465 705,468', '770,435 785,440 790,470 775,465',
  '955,1018 965,1020 968,1052 958,1050',
  '310,430 345,425 350,440 320,445',
]
const BORDERS = [
  'M190 420H300L330 440', 'M137 285V358', 'M215 495L285 510', 'M280 530L325 560',
  'M690 270L660 330L630 370', 'M705 268L700 330', 'M620 410L700 400L720 440', 'M640 405L680 440',
  'M720 420L800 400L900 420L1000 400L1062 415', 'M800 400L820 450L880 440L900 420', 'M900 420L950 455L1000 455L1040 420',
  'M880 440L870 520', 'M900 515L960 500L1005 505', 'M730 475L800 470L820 510', 'M750 520L800 530',
  'M565 520L650 520L700 500', 'M600 600L660 530L735 530', 'M650 600L720 590L760 580', 'M625 520L620 600', 'M690 535V620',
  'M665 680L730 690', 'M660 640L735 640', 'M715 600L720 680',
  'M365 625L420 640L400 700L370 720', 'M370 700L415 700L430 720', 'M380 780L375 700',
]

const WorldMap = () => (
  <MapSvg viewBox="6 9 1203 1200" preserveAspectRatio="none">
    <rect x="6" y="9" width="1203" height="1200" fill="#aad3df" />
    {LAND.map((p, i) => <polygon key={i} points={p} fill="#f2efe9" stroke="#f2efe9" strokeWidth="3" strokeLinejoin="round" />)}
    {WATER.map((p, i) => <polygon key={i} points={p} fill="#aad3df" stroke="#aad3df" strokeWidth="2" strokeLinejoin="round" />)}
    {BORDERS.map((d, i) => <path key={i} d={d} fill="none" stroke="#e2d6da" strokeWidth="1.6" />)}
    <path d="M45 400L12 410" stroke="#f2efe9" strokeWidth="2" />
    <circle cx="673" cy="452" r="8" fill="#ef5064" />
  </MapSvg>
)

const TREE = [
  ['star', '收藏夹'], ['bookmark', '空间书签'], ['home', '项目主目录'], ['homeDir', '主目录'],
  ['folder', 'C:\\'], ['folder', 'D:\\'], ['folder', 'E:\\'], ['folder', 'G:\\'],
]
const MENU = [
  ['项目(J)', 7], ['编辑(E)', 9], ['视图(V)', 10], ['图层(L)', 8], ['设置(S)', 9], ['插件(P)', 8], ['矢量(O)', 11],
  ['栅格(R)', 9], ['数据库(D)', 10], ['网络(W)', 12], ['网孔(M)', 11], ['处理(C)', 9], ['帮助(H)', 0],
]
const PLAY = ['playBack', 'pause', 'playFwd', 'stepEnd', 'skipEnd']

const App = () => (
  <Page>
    <GlobalStyle />
    <TitleBar>
      {ICONS.logo}
      <AppTitle>*111 — QGIS</AppTitle>
      <WinButton><svg width="8" height="8"><path d="M1 4.5h6" stroke="#888" /></svg></WinButton>
      <WinButton><svg width="8" height="8"><path d="M1.5 2.5h4.500v5h-4.500zM3 2.500V1h4.500v4.500H6" stroke="#555" fill="none" /></svg></WinButton>
      <WinButton><svg width="8" height="8"><path d="M1 1l6 6M7 1l-6 6" stroke="#666" /></svg></WinButton>
    </TitleBar>
    <MenuBar>
      {MENU.map(([label, gap]) => <MenuItem key={label} $gap={gap}>{label}</MenuItem>)}
    </MenuBar>
    <Toolbar $h={22}><ToolItems items={TB1} /></Toolbar>
    <Toolbar $h={22}><ToolItems items={TB2} /></Toolbar>
    <Toolbar $h={22}><ToolItems items={TB3} /></Toolbar>
    <Toolbar $h={21}><ToolItems items={TB4} /></Toolbar>

    <Main>
      <LeftDock>
        <PanelHead $mt={1}>
          浏览
          <DockBtns><DockBtn /><DockBtn /></DockBtns>
        </PanelHead>
        <PanelTools>
          <ToolItems items={[['addGroup', 9], ['refresh', 23], ['funnel', 37], ['collapse', 52], ['info', 65]]} />
        </PanelTools>
        <BrowserBody>
          <Tree>
            {TREE.map(([icon, label]) => (
              <TreeRow key={label}>
                <Arrow />
                <TreeIcon>{ICONS[icon]}</TreeIcon>
                {label}
              </TreeRow>
            ))}
          </Tree>
          <ScrollBar>
            <SpinUp />
            <ScrollThumb />
            <SpinDown />
          </ScrollBar>
        </BrowserBody>
        <PanelHead $mt={4}>
          图层
          <DockBtns><DockBtn /><DockBtn /></DockBtns>
        </PanelHead>
        <PanelTools>
          <ToolItems
            items={[['paint', 8], ['addLayer', 22], ['eye', 36], ['funnel', 51], ['expr', 66], ['dd', 75], ['expand', 86], ['collapse', 101], ['remove', 115]]}
          />
        </PanelTools>
        <LayerBody>
          <TreeRow $sel $pad={12}>
            <CheckBox><Tick /></CheckBox>
            <TreeIcon $mr={2}>{ICONS.layerPts}</TreeIcon>
            <LayerName>quake2020</LayerName>
            {ICONS.clockBlue}
          </TreeRow>
          <TreeRow $pad={12}>
            <CheckBox />
            <TreeIcon $mr={2}>{ICONS.layerPtsRed}</TreeIcon>
            <LayerName $dim>signif</LayerName>
          </TreeRow>
          <TreeRow $pad={3}>
            <DownArrow />
            <CheckBox><Tick /></CheckBox>
            <TreeIcon $mr={2}>{ICONS.osm}</TreeIcon>
            <LayerName>OpenStreetMap</LayerName>
          </TreeRow>
        </LayerBody>
      </LeftDock>
      <Splitter />
      <RightDock>
        <Temporal>
          <TempTitle>
            Temporal Controller
            <DockBtns><DockBtn /><DockBtn /></DockBtns>
          </TempTitle>
          <TempTools>
            <ToolHolder $w={13}>{ICONS.closeRed}</ToolHolder>
            <ToolHolder $w={15}>{ICONS.clockGray}</ToolHolder>
            <RedBox $w={16} $h={17}>{ICONS.playGray}</RedBox>
            <FrameText>Frame: 2018-01-04 10:46:00 to 2018-01-04 11:46:00</FrameText>
            <ToolHolder $w={697} />
            <ToolHolder $w={9}>{ICONS.hexYellow}</ToolHolder>
          </TempTools>
          <PlayRow>
            <HintBox>{ICONS.skipStart}</HintBox>
            <HintBox>{ICONS.stepStart}</HintBox>
            {PLAY.map(name => <HintBox key={name}>{ICONS[name]}</HintBox>)}
            <Slider />
            <LoopLabel><CheckBox />Loop</LoopLabel>
          </PlayRow>
          <RangeRow>
            <Caption $w={18}>Range</Caption>
            <DateField $w={238}>2018-01-04 10:46:00<Spin /></DateField>
            <Caption $w={10} $ml={3}>to</Caption>
            <DateField $w={237}>2020-08-18 00:03:00<Spin /></DateField>
            <RedBox $w={17} $h={19} $ml={1}>{ICONS.refresh}</RedBox>
            <Slot $w={4} $gap={1}><DropArrow /></Slot>
            <Caption $w={12} $ml={1}>Step</Caption>
            <RedBox $w={127} $h={19} $justify="flex-start" $pad={1}>
              <DateField $w={63}>1.000<Spin /></DateField>
              <DateField $w={56} $ml={2} $combo>months<ComboDrop><DropArrow /></ComboDrop></DateField>
            </RedBox>
            <Slot $w={12} $gap={0} $h={12}>{ICONS.saveSmall}</Slot>
          </RangeRow>
        </Temporal>
        <Canvas>
          <WorldMap />
          <Watermark>
            <svg width="44" height="46" viewBox="0 0 44 46" fill="#fff" stroke="#bbb">
              <path d="M17 1C8 1 1 7 1 14c0 4 2 7 5 10l-1 6 6-3c2 .6 4 1 6 1l6-1c-1-1-1-3-1-5 0-6 6-11 12-11h1C33 5 26 1 17 1z" />
              <path d="M31 13c-7 0-12 5-12 10s5 11 12 11l4 .6 5 3-1-5c3-2 4-5 4-9 0-6-5-10.6-12-10.6z" />
              <circle cx="11" cy="10" r="1.4" fill="#ccc" /><circle cx="23" cy="10" r="1.4" fill="#ccc" />
              <circle cx="26" cy="20" r="1.2" fill="#ccc" /><circle cx="36" cy="20" r="1.2" fill="#ccc" />
            </svg>
            <WaterText>QGIS课堂</WaterText>
          </Watermark>
        </Canvas>
        <Tooltip>Animated temporal navigation</Tooltip>
        <Cursor viewBox="0 0 8 12"><path d="M1 0v10l2.2-2 1.500 3.500 1.500-.6L4.700 7.500H7.500z" fill="#fff" stroke="#222" strokeWidth=".7" /></Cursor>
      </RightDock>
    </Main>

    <Status>
      <StatusField $w={112} $ml={3} $c="#999">
        <StatusIcon $ml={3}>{ICONS.search}</StatusIcon>
        <StatusText $ml={4} $w={94} $c="#999">键入以定位(Ctrl+K)</StatusText>
      </StatusField>
      <StatusText $ml={5} $w={430}>正在获取重缩文件。</StatusText>
      <StatusText $ml={81} $w={14}>坐标</StatusText>
      <StatusField $w={68}>-26334436, 20278924</StatusField>
      <StatusIcon $ml={1}>{ICONS.coord}</StatusIcon>
      <StatusText $ml={6} $w={21}>比例尺</StatusText>
      <StatusField $w={46}>212902096<ComboDrop $w={11}><DropArrow /></ComboDrop></StatusField>
      <StatusIcon $ml={4}>{ICONS.lock}</StatusIcon>
      <StatusText $ml={3} $w={21}>放大镜</StatusText>
      <StatusField $w={51}>100%<Spin /></StatusField>
      <StatusText $ml={7} $w={29}>旋转角度</StatusText>
      <StatusField $w={52}>0.0°<Spin /></StatusField>
      <StatusIcon $ml={3}><CheckBox><Tick /></CheckBox></StatusIcon>
      <StatusText $w={16}>渲染</StatusText>
      <StatusIcon $ml={5}>{ICONS.crs}</StatusIcon>
      <StatusText $ml={2} $w={39}>EPSG:3857</StatusText>
      <StatusIcon $ml={4}>{ICONS.msg}</StatusIcon>
    </Status>
  </Page>
)

export default App
